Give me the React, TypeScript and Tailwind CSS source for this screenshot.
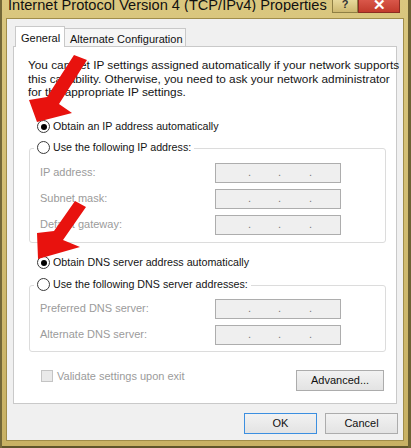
import React from "react";

const Radio = ({ checked }: { checked?: boolean }) => (
  <span className="w-[13px] h-[13px] rounded-full border border-[#3a3a3a] bg-white flex items-center justify-center shrink-0">
    {checked && <span className="w-[6px] h-[6px] rounded-full bg-black" />}
  </span>
);

const IpBox = () => (
  <div className="w-[126px] h-[20px] border border-[#adadad] bg-[#efefef] flex items-end pb-[4px] pl-[32px] text-[#7a7a7a] text-[11px] leading-none">
    <span className="w-[30px]">.</span>
    <span className="w-[31px]">.</span>
    <span>.</span>
  </div>
);

const FieldRow = ({ label }: { label: string }) => (
  <div className="flex items-center h-[20px] pl-[10px]">
    <span className="w-[175px] text-[#9b9b9b]">{label}</span>
    <IpBox />
  </div>
);

const Button = ({ label, primary, w }: { label: string; primary?: boolean; w: string }) => (
  <div
    className={
      "h-[21px] flex items-center justify-center bg-[linear-gradient(180deg,#f2f2f2,#e3e3e3)] border text-[#111] " +
      w +
      (primary ? " border-[#3c8fe0]" : " border-[#acacac]")
    }
  >
    {label}
  </div>
);

export default function App() {
  return (
    <div className="relative w-[411px] h-[448px] overflow-hidden bg-[linear-gradient(180deg,#dac77f,#c8b164)] shadow-[inset_2px_0_0_#746838,inset_-3px_0_0_#6e6233,inset_0_-2px_0_#5f552b] font-['Liberation_Sans',Arial,sans-serif] text-[11px] text-[#141414] flex flex-col">
      {/* title bar */}
      <div className="h-[19px] flex items-start pl-[8px] shrink-0">
        <div className="flex-1 -mt-[2px] text-[14.6px] leading-[14px] text-[#111] whitespace-nowrap overflow-hidden">
          Internet Protocol Version 4 (TCP/IPv4) Properties
        </div>
        <div className="w-[26px] h-[13px] bg-[linear-gradient(180deg,#e7d89a,#cdb870)] border border-t-0 border-[#8f7f44] flex justify-center overflow-hidden">
          <span className="-mt-[4px] text-[11px] font-bold text-[#333]">?</span>
        </div>
        <div className="w-[42px] h-[13px] mr-[11px] bg-[linear-gradient(180deg,#d9574a,#c23a2c)] border border-t-0 border-[#8c2c22] flex justify-center overflow-hidden">
          <span className="-mt-[6px] text-[15px] font-bold text-white">✕</span>
        </div>
      </div>

      {/* client area */}
      <div className="ml-[7px] w-[396px] h-[421px] bg-[#f0f0f0] outline outline-1 outline-[#a08d4a] flex flex-col shrink-0">
        {/* tabs */}
        <div className="flex items-end h-[28px] pl-[8px] shrink-0">
          <div className="relative z-10 w-[50px] h-[21px] bg-white border border-b-0 border-[#c9c9c9] pl-[5px] pt-[3px] text-[#111]">
            General
          </div>
          <div className="w-[121px] h-[18px] bg-[#f6f6f6] border border-l-0 border-b-0 border-[#c9c9c9] pl-[5px] pt-[2px] mb-[1px] text-[#111]">
            Alternate Configuration
          </div>
        </div>

        {/* panel */}
        <div className="-mt-[1px] ml-[6px] w-[384px] h-[358px] bg-white border border-[#c9c9c9] flex flex-col shrink-0">
          <p className="mt-[12px] ml-[14px] text-[11.8px] leading-[13.5px] whitespace-nowrap">
            You can get IP settings assigned automatically if your network supports
            <br />
            this capability. Otherwise, you need to ask your network administrator
            <br />
            for the appropriate IP settings.
          </p>

          <div className="mt-[20px] ml-[23px] h-[14px] flex items-center gap-[3px] text-[10.7px]">
            <Radio checked />
            <span>Obtain an IP address automatically</span>
          </div>

          <div className="mt-[14px] ml-[15px] w-[357px] border border-[#dcdcdc] rounded-[3px] pb-[7px] flex flex-col">
            <div className="-mt-[8px] ml-[4px] pl-[3px] pr-[3px] h-[14px] w-fit bg-white flex items-center gap-[3px] text-[10.7px]">
              <Radio />
              <span>Use the following IP address:</span>
            </div>
            <div className="mt-[8px] flex flex-col gap-[6px]">
              <FieldRow label="IP address:" />
              <FieldRow label="Subnet mask:" />
              <FieldRow label="Default gateway:" />
            </div>
          </div>

          <div className="mt-[13px] ml-[23px] h-[14px] flex items-center gap-[3px] text-[10.7px]">
            <Radio checked />
            <span>Obtain DNS server address automatically</span>
          </div>

          <div className="mt-[15px] ml-[15px] w-[357px] border border-[#dcdcdc] rounded-[3px] pb-[6px] flex flex-col">
            <div className="-mt-[8px] ml-[4px] pl-[3px] pr-[3px] h-[14px] w-fit bg-white flex items-center gap-[3px] text-[10.7px]">
              <Radio />
              <span>Use the following DNS server addresses:</span>
            </div>
            <div className="mt-[7px] flex flex-col gap-[6px]">
              <FieldRow label="Preferred DNS server:" />
              <FieldRow label="Alternate DNS server:" />
            </div>
          </div>

          <div className="mt-[18px] ml-[27px] mr-[12px] flex items-start">
            <div className="flex items-center gap-[4px] h-[13px] flex-1">
              <span className="w-[12px] h-[12px] border border-[#c4c4c4] bg-[#e9e9e9] shrink-0" />
              <span className="text-[#9b9b9b]">Validate settings upon exit</span>
            </div>
            <Button label="Advanced..." w="w-[88px]" />
          </div>
        </div>

        {/* dialog buttons */}
        <div className="mt-[9px] flex justify-end gap-[8px] pr-[5px]">
          <Button label="OK" primary w="w-[73px]" />
          <Button label="Cancel" w="w-[73px]" />
        </div>
      </div>

      {/* red arrows drawn over the screenshot */}
      <svg className="absolute inset-0 pointer-events-none" width="411" height="448" viewBox="0 0 411 448">
        <polygon points="87,60 74,55 47,97 29,100 37,122 72,113 59,104" fill="#e8120e" />
        <polygon points="86,207 75,201 54,231 37,233 38,259 80,247 63,240" fill="#e8120e" />
      </svg>
    </div>
  );
}
